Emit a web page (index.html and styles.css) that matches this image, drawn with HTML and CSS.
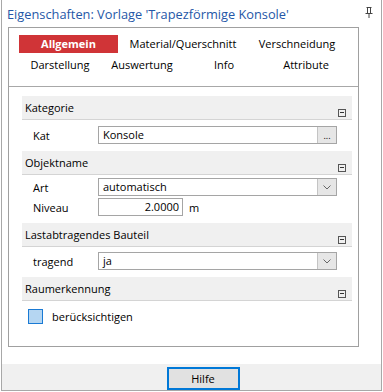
FILE: index.html
```html
<!DOCTYPE html>
<html>
<head>
<meta charset="utf-8">
<link rel="stylesheet" href="styles.css">
</head>
<body>
<div class="window">
  <div class="titlebar">
    <span class="title">Eigenschaften: Vorlage 'Trapezförmige Konsole'</span>
    <svg class="pin" width="8" height="11" viewBox="0 0 8 11">
      <path d="M1.5 0.5H6.5M2.5 0.5V6M5.5 0.5V6M0.5 6.5H7.5M4 7V11" stroke="#444" stroke-width="1" fill="none"/>
    </svg>
  </div>
  <div class="panel">
    <div class="tabs">
      <div class="tabrow row1">
        <div class="tab active">Allgemein</div>
        <div class="tab">Material/Querschnitt</div>
        <div class="tab">Verschneidung</div>
      </div>
      <div class="tabrow row2">
        <div class="tab">Darstellung</div>
        <div class="tab">Auswertung</div>
        <div class="tab">Info</div>
        <div class="tab">Attribute</div>
      </div>
    </div>
    <div class="content">
      <div class="section">
        <div class="sechead"><span>Kategorie</span><span class="minus"></span></div>
        <div class="rows rows-kat">
          <div class="row">
            <span class="label">Kat</span>
            <div class="field wide"><span class="val">Konsole</span><span class="btn dots">...</span></div>
          </div>
        </div>
      </div>
      <div class="section">
        <div class="sechead"><span>Objektname</span><span class="minus"></span></div>
        <div class="rows rows-obj">
          <div class="row">
            <span class="label">Art</span>
            <div class="field wide"><span class="val">automatisch</span><span class="btn"><svg width="8" height="5" viewBox="0 0 8 5"><path d="M0.5 0.5L4 4L7.5 0.5" stroke="#666" fill="none"/></svg></span></div>
          </div>
          <div class="row">
            <span class="label">Niveau</span>
            <div class="field num"><span class="val right">2.0000</span></div>
            <span class="unit">m</span>
          </div>
        </div>
      </div>
      <div class="section">
        <div class="sechead"><span>Lastabtragendes Bauteil</span><span class="minus"></span></div>
        <div class="rows rows-last">
          <div class="row">
            <span class="label">tragend</span>
            <div class="field wide"><span class="val">ja</span><span class="btn"><svg width="8" height="5" viewBox="0 0 8 5"><path d="M0.5 0.5L4 4L7.5 0.5" stroke="#666" fill="none"/></svg></span></div>
          </div>
        </div>
      </div>
      <div class="section">
        <div class="sechead"><span>Raumerkennung</span><span class="minus"></span></div>
        <div class="rows rows-raum">
          <div class="row check">
            <span class="box"></span>
            <span>berücksichtigen</span>
          </div>
        </div>
      </div>
    </div>
  </div>
  <div class="spacer"></div>
  <div class="footer">
    <div class="button">Hilfe</div>
  </div>
</div>
</body>
</html>
```

FILE: styles.css
```css
* { box-sizing: border-box; }
html, body { margin: 0; padding: 0; background: #ffffff; }
body {
  width: 383px;
  height: 392px;
  font-family: "Open Sans", "Noto Sans", sans-serif;
  font-size: 11px;
  color: #000;
  overflow: hidden;
}
.window {
  margin-left: 1px;
  width: 381px;
  height: 391px;
  border-left: 1px solid #a8a8a8;
  border-right: 1px solid #a8a8a8;
  border-bottom: 1px solid #a8a8a8;
  display: flex;
  flex-direction: column;
  background: #fff;
}
.titlebar {
  height: 27px;
  display: flex;
  align-items: flex-start;
  justify-content: space-between;
  padding: 6px 8px 0 5px;
}
.title {
  color: #2557a7;
  font-size: 12.8px;
  line-height: 16px;
}
.pin { margin-top: 1px; }
.panel {
  margin: 0 22px 0 6px;
  height: 320px;
  border: 1px solid #a0a0a0;
  display: flex;
  flex-direction: column;
}
.tabs {
  padding: 7px 0 0 10px;
  height: 59px;
  flex-shrink: 0;
  border-bottom: 1px solid #a8a8a8;
}
.tabrow { display: grid; height: 18px; align-items: center; }
.row1 { grid-template-columns: 99px 130px 98px; }
.row2 { grid-template-columns: 82px 82px 82px 82px; margin-top: 3px; }
.tab { text-align: center; line-height: 18px; white-space: nowrap; }
.tab.active {
  background: #d03437;
  color: #fff;
  font-weight: bold;
}
.content {
  padding: 9px 6px 0 13px;
}
.sechead {
  height: 24px;
  background: #f0f0f0;
  border-bottom: 1px solid #d4d4d4;
  display: flex;
  justify-content: space-between;
  padding: 0 6px 0 3px;
  line-height: 23px;
}
.minus {
  width: 8px;
  height: 8px;
  margin-top: 13px;
  border: 1px solid #555;
  position: relative;
}
.minus::after {
  content: "";
  position: absolute;
  left: 1px;
  right: 1px;
  top: 2px;
  height: 1px;
  background: #333;
}
.rows { display: flex; flex-direction: column; }
.rows-kat { padding: 6px 0 7px; }
.rows-obj { padding: 3px 0 7px; gap: 2px; }
.rows-last { padding: 5px 0 7px; }
.rows-raum { padding: 6px 0 0; }
.row {
  display: flex;
  align-items: center;
  height: 18px;
}
.label { width: 76px; padding-left: 11px; }
.field {
  height: 18px;
  border: 1px solid #a5a5a5;
  display: flex;
  align-items: stretch;
  background: #fff;
}
.field.wide { width: 239px; }
.field.num { width: 85px; }
.val {
  flex: 1;
  padding: 0 4px;
  line-height: 16px;
}
.val.right { text-align: right; padding-right: 3px; }
.btn {
  width: 19px;
  background: #e6e6e6;
  border-left: 1px solid #c4c4c4;
  display: flex;
  align-items: center;
  justify-content: center;
}
.btn.dots { font-size: 9px; line-height: 14px; align-items: flex-end; }
.unit { margin-left: 6px; }
.check .box {
  width: 15px;
  height: 15px;
  background: #b5d6f2;
  border: 1px solid #1a7ad4;
  margin: 0 9px 0 6px;
}
.spacer { height: 17px; flex-shrink: 0; }
.footer {
  flex: 1;
  background: #f0f0f0;
  display: flex;
  justify-content: center;
  padding-top: 3px;
  padding-left: 23px;
}
.button {
  width: 73px;
  height: 23px;
  border: 2px solid #0078d7;
  background: #e1e1e1;
  text-align: center;
  line-height: 19px;
  font-size: 11px;
}
```
